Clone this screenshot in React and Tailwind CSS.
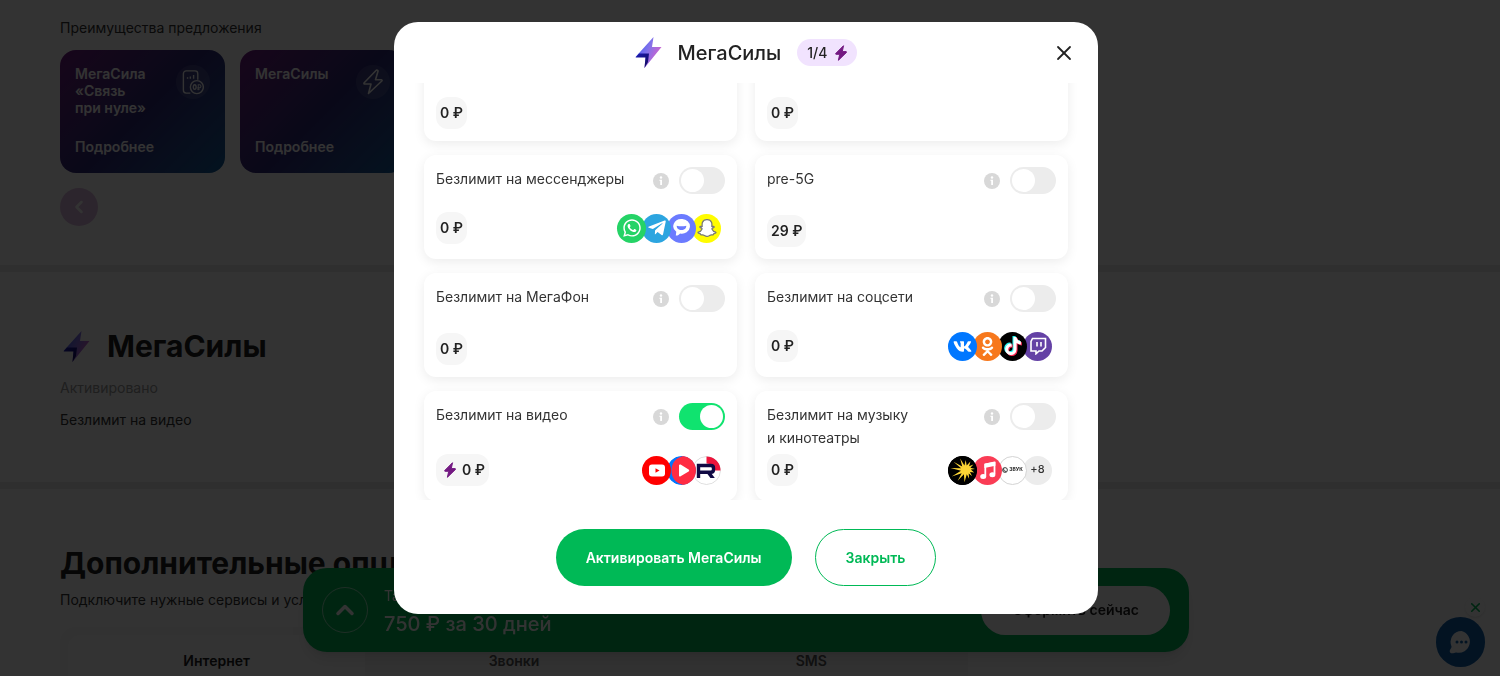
// src/App.jsx
import React, { useLayoutEffect, useRef, useState } from 'react';
import { FaWhatsapp, FaTelegramPlane, FaSnapchatGhost, FaVk, FaOdnoklassniki, FaTiktok } from 'react-icons/fa';
import { ChevronLeft, ChevronUp, X } from 'lucide-react';

function GradientBolt({ id, className }) {
  return (
    <svg viewBox="0 0 26 31" className={className} aria-hidden="true">
      <defs>
        <linearGradient id={id} x1="0" y1="0.1" x2="1" y2="0.6">
          <stop offset="0.15" stopColor="#4a5ff2" />
          <stop offset="0.5" stopColor="#8172ea" />
          <stop offset="0.9" stopColor="#c964d0" />
        </linearGradient>
        <linearGradient id={`${id}-dark`} x1="0" y1="0" x2="1" y2="1">
          <stop offset="0" stopColor="#1b1bb4" />
          <stop offset="1" stopColor="#120a55" />
        </linearGradient>
      </defs>
      <path d="M18 0 0 20h10L9 31 26 10H16.500L18 0z" fill={`url(#${id})`} />
      <path d="M0 20.500l3.500-4h10L12.500 25 9 31l1-10.500z" fill={`url(#${id}-dark)`} />
    </svg>
  );
}

function PurpleBolt({ className }) {
  return (
    <svg viewBox="0 0 12 16" className={className} aria-hidden="true">
      <path
        d="M8.500.7.800 8.400c-.4.400-.2.900.3.900h3.600L3.400 15.300l8-7.800c.3-.4.100-.9-.4-.9H7.300L8.500.7z"
        fill="#731982"
        stroke="#731982"
        strokeLinejoin="round"
      />
    </svg>
  );
}

function MessengerMark() {
  return (
    <svg viewBox="0 0 20 18" className="w-[19px]" aria-hidden="true">
      <path d="M10 0a8.500 7.600 0 0 0-5.500 13.500l-.5 3.900c1.700.3 3.400-.7 4.500-2.200A8.500 7.700 0 1 0 10 0z" fill="#fff" />
      <path d="M5 7c3 1 7 1 10 0 .2 2.800-2 4.500-5 4.500S4.800 9.800 5 7z" fill="#6b7bff" />
    </svg>
  );
}

function TwitchMark() {
  return (
    <svg viewBox="0 0 18 18" className="w-[18px]" fill="none" stroke="#fff" strokeWidth="1.600" aria-hidden="true">
      <path d="M3.500 1.500h13v9L13 14h-3l-3 2.800V14H2V4.500z" />
      <path d="M8 5v4.500M12 5v4.500" />
    </svg>
  );
}

function YoutubeMark() {
  return (
    <svg viewBox="0 0 18 13" className="w-[18px]" aria-hidden="true">
      <rect x="1" y="0.500" width="16" height="12" rx="3" fill="#fff" />
      <path d="M7.500 4.200v4.600l4-2.300z" fill="#f00" />
    </svg>
  );
}

function VkVideoMark() {
  return (
    <svg viewBox="0 0 29 29" className="h-[29px] w-[29px]" aria-hidden="true">
      <circle cx="14.500" cy="14.500" r="14.500" fill="#0077ff" />
      <path d="M16 0a14.500 14.500 0 0 1 0 29C8 27 4.500 21 4.500 14.500S8 2 16 0z" fill="#ff2b42" />
      <path d="M12 9.500c0-1 .8-1.300 1.600-.9l8 4.800c.8.500.8 1.500 0 2l-8 4.900c-.8.500-1.600.1-1.600-.9z" fill="#fff" />
    </svg>
  );
}

function RutubeMark() {
  return (
    <svg viewBox="0 0 29 29" className="h-[29px] w-[29px]" aria-hidden="true">
      <circle cx="14.500" cy="14.500" r="14" fill="#fff" stroke="#dcdcdc" />
      <path d="M14.500.500a14 14 0 0 1 14 14H23a9 9 0 0 0-8.500-7z" fill="#ed143b" />
      <path
        d="M6.500 22V9.500h12.300c2 0 2.700.8 2.700 2.500v1.700c0 1.700-.7 2.500-2.700 2.500H8"
        fill="none"
        stroke="#100943"
        strokeWidth="3.400"
      />
      <path d="M14 16h4.300l4.500 6h-4.400z" fill="#100943" />
    </svg>
  );
}

function SunMark() {
  return (
    <svg viewBox="0 0 29 29" className="h-[29px] w-[29px]" aria-hidden="true">
      <circle cx="14.500" cy="14.500" r="14.500" fill="#000" />
      <path
        d="M27 13l-4.200.5 3.400 3-4.200-.6 2 4-3.300-2.400.4 5.300-2.300-4.600-2.300 8-.6-8-6.200 6.600 4-7.600-10 3.200 9.300-5.700L2.500 12l10.600.3L5.500 5.800l8.700 4.600-2-7.900 4.200 7 1.300-5.600 1 5.700 3.700-4.200-1.300 4.900 4.300-1.800-3 3.200z"
        fill="#fcd535"
      />
    </svg>
  );
}

function NoteMark() {
  return (
    <svg viewBox="0 0 18 19" className="h-[19px]" aria-hidden="true">
      <path d="M6.300 15V3.600L15.500 1.800V13" fill="none" stroke="#fff" strokeWidth="1.800" />
      <path d="M5.400 3.500c0-.6.3-1 .9-1.100L15.500.600c.6-.1.900.2.900.8v3.300L5.400 6.900z" fill="#fff" />
      <ellipse cx="4.200" cy="15.600" rx="3" ry="2.500" fill="#fff" />
      <ellipse cx="13.400" cy="13.700" rx="3" ry="2.500" fill="#fff" />
    </svg>
  );
}

function ZvukMark() {
  return (
    <span className="flex items-center gap-px text-[5px] font-bold text-[#222]">
      <svg viewBox="0 0 7 7" className="w-[6px]" fill="none" stroke="#222" aria-hidden="true">
        <circle cx="3.500" cy="3.500" r="2.800" />
        <path d="M2 1.500v2.500l3 1.500" />
      </svg>
      ЗВУК
    </span>
  );
}

function TiktokMark() {
  return (
    <span className="relative block">
      <FaTiktok className="absolute -left-px -top-px h-[18px] w-[18px] text-[#25f4ee]" />
      <FaTiktok className="absolute left-px top-px h-[18px] w-[18px] text-[#fe2c55]" />
      <FaTiktok className="relative h-[18px] w-[18px] text-white" />
    </span>
  );
}

const services = {
  whatsapp: { bg: 'bg-[#25d366]', icon: <FaWhatsapp className="h-5 w-5 text-white" /> },
  telegram: { bg: 'bg-[#2ca5e0]', icon: <FaTelegramPlane className="h-5 w-5 text-white" /> },
  messenger: { bg: 'bg-[#6b7bff]', icon: <MessengerMark /> },
  snapchat: {
    bg: 'bg-[#fffc00]',
    icon: <FaSnapchatGhost className="h-[18px] w-[18px] overflow-visible stroke-[#777] stroke-[36] text-white" />,
  },
  vk: { bg: 'bg-[#0077ff]', icon: <FaVk className="h-[19px] w-[19px] text-white" /> },
  ok: { bg: 'bg-[#f7781d]', icon: <FaOdnoklassniki className="h-[19px] w-[19px] text-white" /> },
  tiktok: { bg: 'bg-black', icon: <TiktokMark /> },
  twitch: { bg: 'bg-[#6441a5]', icon: <TwitchMark /> },
  youtube: { bg: 'bg-[#ff0000]', icon: <YoutubeMark /> },
  vkvideo: { bg: 'bg-white', icon: <VkVideoMark /> },
  rutube: { bg: 'bg-white', icon: <RutubeMark /> },
  sun: { bg: 'bg-black', icon: <SunMark /> },
  music: { bg: 'bg-[#fa3c55]', icon: <NoteMark /> },
  zvuk: { bg: 'bg-white border border-[#d4d4d4]', icon: <ZvukMark /> },
  more: { bg: 'bg-[#ececec]', icon: <span className="text-[11px] font-medium text-[#333]">+8</span> },
};

const options = [
  { id: 'first', price: '0 ₽' },
  { id: 'second', price: '0 ₽' },
  { id: 'messengers', title: 'Безлимит на мессенджеры', price: '0 ₽', icons: ['whatsapp', 'telegram', 'messenger', 'snapchat'] },
  { id: 'pre5g', title: 'pre-5G', price: '29 ₽' },
  { id: 'megafon', title: 'Безлимит на МегаФон', price: '0 ₽' },
  { id: 'social', title: 'Безлимит на соцсети', price: '0 ₽', icons: ['vk', 'ok', 'tiktok', 'twitch'] },
  { id: 'video', title: 'Безлимит на видео', price: '0 ₽', icons: ['youtube', 'vkvideo', 'rutube'] },
  { id: 'music', title: 'Безлимит на музыку и\u00a0кинотеатры', price: '0 ₽', icons: ['sun', 'music', 'zvuk', 'more'] },
];

function OptionCard({ option, checked, onToggle }) {
  const { id, title, price, icons } = option;

  return (
    <div className="flex min-h-[104px] flex-col justify-between gap-[5px] rounded-xl bg-white p-3 shadow-[0_3px_12px_rgba(0,0,0,0.08)]">
      {title && (
        <div className="flex items-start justify-between">
          <label htmlFor={id} className="max-w-[200px] text-sm leading-[23px] text-[#333]">
            {title}
          </label>
          <div className="flex h-[27px] items-center gap-[10px]">
            <button
              type="button"
              aria-label="Подробнее об опции"
              className="flex h-4 w-4 items-center justify-center rounded-full bg-[#d8d8d8]"
            >
              <svg viewBox="0 0 16 16" className="h-4 w-4" fill="#fff" aria-hidden="true">
                <circle cx="8" cy="4.500" r="1.200" />
                <path d="M6.500 6.700H9V12H7.200V8h-.7z" />
              </svg>
            </button>
            <input
              id={id}
              type="checkbox"
              role="switch"
              checked={checked}
              onChange={onToggle}
              className="h-[27px] w-[46px] cursor-pointer appearance-none rounded-full bg-[#ececec] p-0.5 before:block before:h-[23px] before:w-[23px] before:rounded-full before:bg-white before:transition checked:bg-[#10e36f] checked:before:translate-x-[19px]"
            />
          </div>
        </div>
      )}
      <div className={`mt-auto flex items-center justify-between ${icons ? 'mb-[3px]' : ''}`}>
        <span className="flex h-8 items-center gap-1.5 rounded-xl bg-[#f6f6f6] px-1 text-sm font-semibold text-[#222]">
          {checked && <PurpleBolt className="ml-1 h-4 w-3" />}
          {price}
        </span>
        {icons && (
          <div className="isolate mr-1 flex -space-x-1">
            {icons.map((name, i) => (
              <span
                key={name}
                className={`relative flex h-[29px] w-[29px] items-center justify-center overflow-hidden rounded-full ${services[name].bg}`}
                style={{ zIndex: icons.length - i }}
              >
                {services[name].icon}
              </span>
            ))}
          </div>
        )}
      </div>
    </div>
  );
}

function MegaPowersModal() {
  const [active, setActive] = useState({ video: true });
  const listRef = useRef(null);

  // open the list a little below its first row
  useLayoutEffect(() => {
    if (listRef.current) listRef.current.scrollTop = 46;
  }, []);

  const toggle = (id) => setActive((prev) => ({ ...prev, [id]: !prev[id] }));

  return (
    <div className="fixed inset-0 z-50 flex items-start justify-center bg-black/80 pt-[22px] pr-2">
      <div
        role="dialog"
        aria-modal="true"
        aria-labelledby="modal-title"
        className="flex max-h-[calc(100vh-84px)] w-full max-w-[704px] flex-col overflow-hidden rounded-3xl bg-white"
      >
        {/* Header */}
        <div className="relative flex h-[61px] shrink-0 items-center justify-center">
          <GradientBolt id="bolt-modal" className="mr-4 h-[31px] w-[27px]" />
          <h2 id="modal-title" className="text-xl font-medium text-[#222]">МегаСилы</h2>
          <span className="ml-4 flex h-[27px] items-center gap-2 rounded-full bg-[#f1e3fe] px-[10px] text-sm font-medium text-[#222]">
            1/4 <PurpleBolt className="h-4 w-3" />
          </span>
          <button type="button" aria-label="Закрыть окно" className="absolute right-[22px] top-[19px] text-[#222]">
            <X className="h-6 w-6" strokeWidth={1.8} />
          </button>
        </div>

        {/* Options */}
        <div ref={listRef} className="min-h-0 flex-1 overflow-y-auto px-[30px] [scrollbar-width:none]">
          <div className="grid grid-cols-2 gap-x-[18px] gap-y-[14px] pb-4">
            {options.map((option) => (
              <OptionCard
                key={option.id}
                option={option}
                checked={!!active[option.id]}
                onToggle={() => toggle(option.id)}
              />
            ))}
          </div>
        </div>

        {/* Actions */}
        <div className="flex shrink-0 justify-center gap-[23px] pt-[29px] pb-7">
          <button type="button" className="h-[57px] rounded-full bg-[#00b956] px-[30px] text-sm font-semibold text-white">
            Активировать МегаСилы
          </button>
          <button type="button" className="h-[57px] rounded-full border border-[#00b956] px-[30px] text-sm font-semibold text-[#00b956]">
            Закрыть
          </button>
        </div>
      </div>
    </div>
  );
}

function BenefitCard({ title, children }) {
  return (
    <a
      href="#details"
      className="flex h-[123px] w-[165px] shrink-0 flex-col justify-between rounded-2xl bg-linear-135 from-[#731982] via-[#2f2a7a] to-[#08609e] px-[15px] pt-[15px] pb-3.5 text-sm font-semibold text-white"
    >
      <span className="flex items-start justify-between">
        <span className="w-[85px] leading-[17px]">{title}</span>
        <span className="flex h-[34px] w-[34px] shrink-0 items-center justify-center rounded-full bg-white/10">
          {children}
        </span>
      </span>
      <span className="leading-6">Подробнее</span>
    </a>
  );
}

function TariffBar() {
  return (
    <div className="fixed inset-x-0 bottom-6 z-10 flex justify-center pr-2">
      <div className="flex h-[84px] w-full max-w-[886px] items-center rounded-3xl bg-[#00b956] px-[19px] text-white shadow-lg">
        <button
          type="button"
          aria-label="Развернуть"
          className="flex h-[46px] w-[46px] items-center justify-center rounded-full border border-white/60"
        >
          <ChevronUp className="h-7 w-7" strokeWidth={3} />
        </button>
        <div className="ml-4">
          <p className="text-sm leading-7">Тариф</p>
          <p className="text-xl font-medium leading-7">750 ₽ за 30 дней</p>
        </div>
        <button type="button" className="ml-auto h-[49px] rounded-full bg-white px-[31px] text-sm font-semibold text-[#222]">
          Оформить сейчас
        </button>
      </div>
    </div>
  );
}

function ChatWidget() {
  return (
    <div className="fixed right-[15px] bottom-[9px] z-10 flex flex-col items-end">
      <button
        type="button"
        aria-label="Скрыть чат"
        className="flex h-5 w-5 items-center justify-center rounded-full bg-white text-[#00b956] shadow"
      >
        <X className="h-[15px] w-[15px]" strokeWidth={2.5} />
      </button>
      <button
        type="button"
        aria-label="Чат"
        className="flex h-[50px] w-[49px] items-center justify-center rounded-full bg-[#0f5fac]"
      >
        <svg viewBox="0 0 24 24" className="h-6 w-6" aria-hidden="true">
          <path d="M12.500 1a11 11 0 0 0-10 15.500c.3 1.500-1.500 3-1.800 4.500 0 1.500 1 2.300 2.500 2.300 1.500 0 2.500-1 4-.9A11 11 0 1 0 12.500 1z" fill="#fff" />
          <g fill="#0f5fac">
            <circle cx="8" cy="12" r="1.500" />
            <circle cx="12.500" cy="12" r="1.500" />
            <circle cx="17" cy="12" r="1.500" />
          </g>
        </svg>
      </button>
    </div>
  );
}

export default function App() {
  return (
    <div className="h-screen overflow-hidden bg-white font-['Inter','Liberation_Sans',sans-serif] text-sm text-[#333]">
      {/* Benefits */}
      <section className="h-[272px] border-b-[7px] border-[#ececec] px-[60px] pt-4">
        <p className="leading-[23px]">Преимущества предложения</p>
        <div className="mt-[11px] flex gap-[15px]">
          <BenefitCard title="МегаСила «Связь при&nbsp;нуле»">
            <svg viewBox="0 0 24 28" className="h-[26px]" fill="none" stroke="#fff" strokeWidth="1.500" aria-hidden="true">
              <path d="M9 26H4.500a3 3 0 0 1-3-3V5a3 3 0 0 1 3-3H14a3 3 0 0 1 3 3v6.500" />
              <circle cx="16" cy="19.500" r="7" />
              <path d="M6 10.500V9M9 10.500V8M12.500 10.500v-4" />
              <ellipse cx="13.700" cy="19.500" rx="1.500" ry="2.500" />
              <path d="M17.500 23v-6h1.300a1.500 1.500 0 0 1 0 3.200h-2.300M16.500 21.800h2.500" strokeWidth="1.100" />
            </svg>
          </BenefitCard>
          <BenefitCard title="МегаСилы">
            <svg viewBox="0 0 20 26" className="h-[26px]" fill="none" stroke="#fff" strokeWidth="1.600" strokeLinejoin="round" aria-hidden="true">
              <path d="M13 1.500 1.200 13.800c-.5.500-.2 1.200.5 1.200H8L5.500 24.500 18.800 12c.5-.5.200-1.200-.5-1.200H12.500L15 2.300c.2-.9-1.300-1.500-2-.8z" />
            </svg>
          </BenefitCard>
        </div>
        <button
          type="button"
          aria-label="Назад"
          className="mt-[15px] flex h-[38px] w-[38px] items-center justify-center rounded-full bg-[#dcb8de] text-white"
        >
          <ChevronLeft className="h-5 w-5" strokeWidth={3} />
        </button>
      </section>

      {/* Mega powers */}
      <section className="h-[217px] border-b-[7px] border-[#ececec] px-[60px] pt-[52px]">
        <div className="flex h-11 items-center gap-[17px] pl-[3px]">
          <GradientBolt id="bolt-page" className="h-[31px] w-[27px]" />
          <h2 className="text-3xl font-bold text-[#222]">МегаСилы</h2>
        </div>
        <p className="mt-2 leading-6 text-[#999]">Активировано</p>
        <p className="mt-2 leading-6">Безлимит на видео</p>
      </section>

      {/* Extra options */}
      <section className="px-[60px] pt-[52px]">
        <h2 className="text-3xl leading-[44px] font-bold whitespace-nowrap text-[#222]">Дополнительные опции</h2>
        <p className="mt-[3px] leading-6">Подключите нужные сервисы и услуги</p>
        <div className="mt-[15px] flex max-w-[908px] rounded-2xl bg-[#f7f7f7] p-2 font-semibold">
          <button type="button" className="h-[52px] flex-1 rounded-xl bg-white text-[#222]">Интернет</button>
          <button type="button" className="h-[52px] flex-1 text-[#555]">Звонки</button>
          <button type="button" className="h-[52px] flex-1 text-[#555]">SMS</button>
        </div>
      </section>

      <TariffBar />
      <ChatWidget />
      <MegaPowersModal />
    </div>
  );
}
